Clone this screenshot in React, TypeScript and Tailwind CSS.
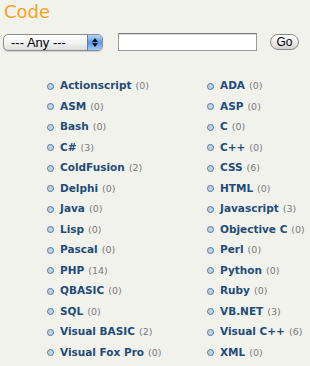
import React from 'react';

type Lang = { name: string; count: number };

const left: Lang[] = [
  { name: 'Actionscript', count: 0 },
  { name: 'ASM', count: 0 },
  { name: 'Bash', count: 0 },
  { name: 'C#', count: 3 },
  { name: 'ColdFusion', count: 2 },
  { name: 'Delphi', count: 0 },
  { name: 'Java', count: 0 },
  { name: 'Lisp', count: 0 },
  { name: 'Pascal', count: 0 },
  { name: 'PHP', count: 14 },
  { name: 'QBASIC', count: 0 },
  { name: 'SQL', count: 0 },
  { name: 'Visual BASIC', count: 2 },
  { name: 'Visual Fox Pro', count: 0 },
];

const right: Lang[] = [
  { name: 'ADA', count: 0 },
  { name: 'ASP', count: 0 },
  { name: 'C', count: 0 },
  { name: 'C++', count: 0 },
  { name: 'CSS', count: 6 },
  { name: 'HTML', count: 0 },
  { name: 'Javascript', count: 3 },
  { name: 'Objective C', count: 0 },
  { name: 'Perl', count: 0 },
  { name: 'Python', count: 0 },
  { name: 'Ruby', count: 0 },
  { name: 'VB.NET', count: 3 },
  { name: 'Visual C++', count: 6 },
  { name: 'XML', count: 0 },
];

const Item: React.FC<{ lang: Lang }> = ({ lang }) => (
  <li className="flex items-center h-[20.5px]">
    <span className="w-[7px] h-[7px] rounded-full bg-[#b9d3ea] border border-[#5a7a98] mr-[6px] shrink-0" />
    <a className="font-bold text-[10.5px] text-[#1f4c78] whitespace-nowrap">{lang.name}</a>
    <span className="ml-[4px] text-[9.5px] text-[#7a7a7a] whitespace-nowrap">({lang.count})</span>
  </li>
);

const App: React.FC = () => {
  return (
    <div className="w-[310px] h-[366px] bg-[#f2f2ed] overflow-hidden" style={{ fontFamily: '"DejaVu Sans", Verdana, sans-serif' }}>
      <h1 className="text-[18px] leading-[22px] text-[#f7a21d] pl-[4px] pt-[1px]">Code</h1>

      <div className="flex items-center mt-[10px] pl-[3px]">
        <div className="relative w-[100px] h-[17px] rounded-[5px] border border-[#8c8c8c] bg-gradient-to-b from-white via-[#f3f3f3] to-[#dcdcdc] flex items-center shadow-[0_1px_1px_rgba(0,0,0,0.15)]">
          <span className="pl-[7px] text-[13px] leading-none text-black" style={{ fontFamily: '"Liberation Sans", Arial, sans-serif' }}>--- Any ---</span>
          <span className="absolute right-0 top-0 bottom-0 w-[15px] rounded-r-[4px] bg-gradient-to-b from-[#b6d6f8] via-[#5a9ae6] to-[#9ccaf6] border-l border-[#5a7fb0] flex flex-col items-center justify-center gap-[1px]">
            <svg width="6" height="4" viewBox="0 0 6 4"><path d="M3 0 L6 4 L0 4 Z" fill="#111" /></svg>
            <svg width="6" height="4" viewBox="0 0 6 4"><path d="M0 0 L6 0 L3 4 Z" fill="#111" /></svg>
          </span>
        </div>

        <input className="ml-[15px] w-[139px] h-[18px] bg-white border border-[#9a9a9a] border-t-[#7a7a7a] shadow-[inset_0_1px_1px_rgba(0,0,0,0.15)] outline-none" />

        <button className="ml-[13px] w-[29px] h-[16px] rounded-full border border-[#8a8a8a] bg-gradient-to-b from-white via-[#ededed] to-[#d2d2d2] text-[12px] leading-none text-black flex items-center justify-center" style={{ fontFamily: '"Liberation Sans", Arial, sans-serif' }}>
          Go
        </button>
      </div>

      <div className="grid grid-cols-[160px_160px] pl-[47px] mt-[25px]">
        <ul>
          {left.map((l) => (
            <Item key={l.name} lang={l} />
          ))}
        </ul>
        <ul>
          {right.map((l) => (
            <Item key={l.name} lang={l} />
          ))}
        </ul>
      </div>
    </div>
  );
};

export default App;
